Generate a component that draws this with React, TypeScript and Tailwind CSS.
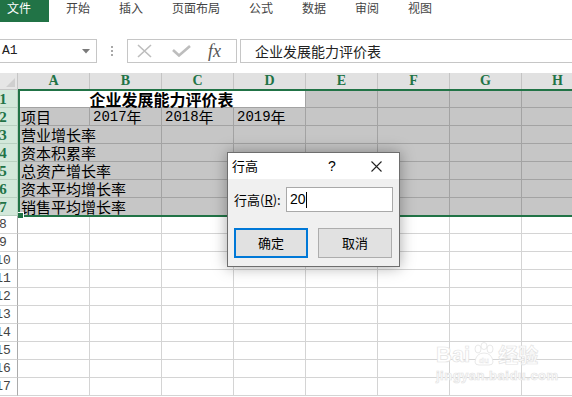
import React from 'react'

const tabs = ['开始', '插入', '页面布局', '公式', '数据', '审阅', '视图']
const cols = ['A', 'B', 'C', 'D', 'E', 'F', 'G', 'H']
const items = ['营业增长率', '资本积累率', '总资产增长率', '资本平均增长率', '销售平均增长率']

const selCell = 'w-[72px] h-[18px] shrink-0 bg-[#c6c6c6] border-r border-b border-[#a3a3a3] pl-[3px] flex items-center whitespace-nowrap leading-[16px]'
const plainCell = 'w-[72px] h-[18px] shrink-0 bg-white border-r border-b border-[#d4d4d4]'

function SelRowHeader({ n }: { n: number }) {
  return (
    <div className="w-[29px] h-[18px] shrink-0 bg-[#d3e8da] border-r border-b border-[#b9d1c1] flex items-center justify-center font-['Liberation_Serif',serif] font-bold text-[15px] leading-[16px] text-[#217346]">
      {n}
    </div>
  )
}

export default function App() {
  return (
    <div className="relative w-[572px] h-[397px] overflow-hidden bg-white font-['Noto_Sans_CJK_SC',sans-serif] text-[#222]">
      {/* ribbon tabs */}
      <div className="flex h-[22px] items-start text-[12px] leading-[16px] text-[#444]">
        <div className="w-[49px] h-[22px] bg-[#217346] text-white pl-[7px]">文件</div>
        <div className="flex gap-[29px] ml-[17px]">
          {tabs.map(t => (
            <span key={t}>{t}</span>
          ))}
        </div>
      </div>

      {/* formula bar */}
      <div className="flex items-stretch h-[24px] mt-[17px]">
        <div className="w-[99px] ml-[-2px] border border-[#c6c6c6] flex items-center pl-[3px] pr-[6px]">
          <span className="font-['Liberation_Mono',monospace] text-[13px] text-[#222]">A1</span>
          <svg className="ml-auto" width="8" height="5" viewBox="0 0 8 5">
            <polygon points="0,0 8,0 4,4.5" fill="#7a7a7a" />
          </svg>
        </div>
        <div className="ml-[14px] flex flex-col justify-center gap-[2px]">
          <div className="w-[2px] h-[2px] bg-[#a8a8a8]" />
          <div className="w-[2px] h-[2px] bg-[#a8a8a8]" />
          <div className="w-[2px] h-[2px] bg-[#a8a8a8]" />
        </div>
        <div className="ml-[14px] w-[110px] border border-[#c6c6c6] flex items-center pl-[9px]">
          <svg width="15" height="14" viewBox="0 0 15 14">
            <path d="M1 1 L14 13 M14 1 L1 13" stroke="#bdbdbd" strokeWidth="1.6" fill="none" />
          </svg>
          <svg className="ml-[20px]" width="19" height="12" viewBox="0 0 19 12">
            <path d="M1 5 L7 10.5 L18 1" stroke="#bdbdbd" strokeWidth="2.6" fill="none" />
          </svg>
          <span className="ml-[17px] font-['Liberation_Serif',serif] italic text-[18px] leading-[18px] text-[#555]">fx</span>
        </div>
        <div className="ml-[3px] flex-1 border-y border-l border-[#c6c6c6] flex items-center pl-[14px] text-[14px] text-[#222]">
          企业发展能力评价表
        </div>
      </div>

      {/* sheet */}
      <div className="mt-[10px] ml-[-11px]">
        {/* column headers */}
        <div className="flex h-[17px]">
          <div className="relative w-[29px] h-[17px] shrink-0 bg-[#e6e6e6] border-r border-b border-[#c6c6c6]">
            <svg className="absolute right-[2px] bottom-[2px]" width="9" height="9" viewBox="0 0 9 9">
              <polygon points="9,0 9,9 0,9" fill="#cfcfcf" />
            </svg>
          </div>
          {cols.map(c => (
            <div
              key={c}
              className="w-[72px] h-[17px] shrink-0 bg-[#e1e1e1] border-r border-b border-[#c4c4c4] flex items-center justify-center font-['Liberation_Serif',serif] font-bold text-[14px] leading-[16px] text-[#217346]"
            >
              {c}
            </div>
          ))}
        </div>

        {/* selected rows 1-7 */}
        <div className="relative">
          <div className="flex">
            <SelRowHeader n={1} />
            <div className="w-[288px] h-[18px] shrink-0 bg-white border-r border-b border-[#a3a3a3] flex items-center justify-center font-bold text-[16px] leading-[16px] text-black">
              企业发展能力评价表
            </div>
            {[0, 1, 2, 3].map(i => (
              <div key={i} className={selCell} />
            ))}
          </div>
          <div className="flex text-[15px] text-black">
            <SelRowHeader n={2} />
            <div className={selCell}>项目</div>
            {['2017', '2018', '2019'].map(y => (
              <div key={y} className={selCell}>
                <span className="font-['Liberation_Mono',monospace] text-[14px]">{y}</span>年
              </div>
            ))}
            {[0, 1, 2, 3].map(i => (
              <div key={i} className={selCell} />
            ))}
          </div>
          {items.map((t, r) => (
            <div key={t} className="flex text-[15px] text-black">
              <SelRowHeader n={r + 3} />
              <div className="w-[144px] h-[18px] shrink-0 bg-[#c6c6c6] border-r border-b border-[#a3a3a3] pl-[3px] flex items-center whitespace-nowrap leading-[16px]">
                {t}
              </div>
              {[0, 1, 2, 3, 4, 5].map(i => (
                <div key={i} className={selCell} />
              ))}
            </div>
          ))}
          <div className="absolute top-[-1px] bottom-[-1px] left-[29px] right-[-20px] border-2 border-[#217346] pointer-events-none" />
          <div className="absolute left-[29px] bottom-[-2px] w-[6px] h-[6px] bg-[#217346] border-r border-t border-white" />
        </div>

        {/* empty rows */}
        {[8, 9, 10, 11, 12, 13, 14, 15, 16, 17].map(n => (
          <div key={n} className="flex">
            <div className="w-[29px] h-[18px] shrink-0 bg-white border-r border-[#ababab] border-b border-b-[#d4d4d4] flex items-center justify-center font-['Liberation_Mono',monospace] text-[13px] leading-[16px] text-[#444]">
              {n}
            </div>
            {cols.map(c => (
              <div key={c} className={plainCell} />
            ))}
          </div>
        ))}
      </div>

      {/* watermark */}
      <div className="absolute left-[436px] top-[344px] flex flex-col items-start text-white [-webkit-text-stroke:0.7px_#e3e3e3] font-['Liberation_Sans',sans-serif] font-bold">
        <div className="flex items-end gap-[2px] h-[22px]">
          <span className="text-[22px] leading-[22px]">Bai</span>
          <svg width="24" height="24" viewBox="0 0 24 24">
            <g fill="white" stroke="#e3e3e3" strokeWidth="0.8">
              <ellipse cx="6" cy="7" rx="3" ry="4" />
              <ellipse cx="12" cy="4" rx="3" ry="3.5" />
              <ellipse cx="18" cy="7" rx="3" ry="4" />
              <path d="M3 20 Q4 11 12 11 Q20 11 21 20 Q21 23 17 23 L7 23 Q3 23 3 20 Z" />
            </g>
            <text x="12" y="21" fontSize="8" textAnchor="middle" fill="white" stroke="#e3e3e3" strokeWidth="0.4">du</text>
          </svg>
          <span className="text-[20px] leading-[22px] font-['Noto_Sans_CJK_SC',sans-serif]">经验</span>
        </div>
        <span className="mt-[3px] text-[13px] leading-[14px] tracking-[0.5px]">jingyan.baidu.com</span>
      </div>

      {/* row height dialog */}
      <div className="absolute left-[227px] top-[152px] w-[173px] h-[115px] border border-[#6e6e6e] bg-[#f0f0f0] shadow-[0_0_14px_rgba(0,0,0,0.35)] text-[13px] text-black">
        <div className="h-[26px] bg-white flex items-center pl-[4px]">
          <span>行高</span>
          <span className="ml-[70px] font-['Liberation_Sans',sans-serif] text-[14px]">?</span>
          <svg className="ml-[35px]" width="11" height="11" viewBox="0 0 11 11">
            <path d="M0.5 0.5 L10.5 10.5 M10.5 0.5 L0.5 10.5" stroke="#222" strokeWidth="1.1" fill="none" />
          </svg>
        </div>
        <div className="px-[6px] pt-[8px]">
          <div className="flex items-center">
            <span className="w-[52px]">
              行高(<span className="underline">R</span>):
            </span>
            <div className="w-[107px] h-[25px] bg-white border border-[#a9a9a9] flex items-center pl-[3px] text-[14px] font-['Liberation_Sans',sans-serif]">
              20
              <div className="w-[1px] h-[16px] bg-black" />
            </div>
          </div>
          <div className="flex gap-[10px] mt-[16px]">
            <div className="w-[74px] h-[30px] bg-[#e1e1e1] border-2 border-[#0078d7] flex items-center justify-center">确定</div>
            <div className="w-[74px] h-[30px] bg-[#e1e1e1] border border-[#adadad] flex items-center justify-center">取消</div>
          </div>
        </div>
      </div>
    </div>
  )
}
